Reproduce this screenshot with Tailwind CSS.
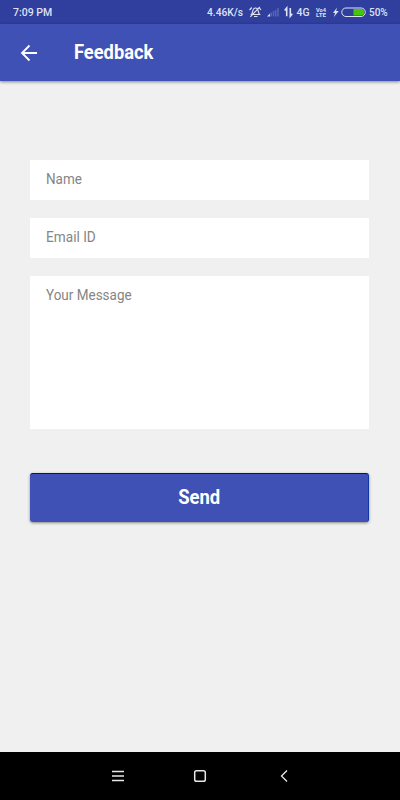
<!DOCTYPE html>
<html lang="en">
<head>
<meta charset="utf-8">
<title>Feedback</title>
<script src="https://cdn.jsdelivr.net/npm/@tailwindcss/browser@4"></script>
</head>
<body class="w-[400px] h-[800px] overflow-hidden bg-[#f0f0f0] font-['Roboto',sans-serif] flex flex-col">
  <div class="h-6 shrink-0 bg-[#303e9e] flex items-center pl-[13px] text-[10px] font-medium text-[#dfe2f3] whitespace-nowrap">
    <span class="w-[194px] pt-[2px] text-[10.5px]">7:09 PM</span>
    <span class="w-[41px] pt-px origin-left scale-x-[1.02]">4.46K/s</span>
    <svg class="w-[153px] h-6 shrink-0 -mr-[32px]" viewBox="248 0 153 24" fill="none" stroke="#dfe2f3">
      <path d="M251.500 14.500c1.500-1.500.5-6.500 4-6.500 3.400 0 2.500 5 4 6.500zM254 16.500h3.500M249.500 10l2.300-2.500M259 7.500l2 2.500M259.800 7l-9.500 9.800" stroke-width="1.150"/>
      <path d="M267 16.500h3v-3z" fill="#dfe2f3" stroke="none"/>
      <path d="M271.300 16.500v-4M273.500 16.500v-5.500M275.700 16.500v-6.800M278 16.500v-8.500" stroke="#5865b3" stroke-width="1.500"/>
      <path d="M286.700 16.300V8l-2 2.500M290.300 8v8.300l2-2.500" stroke-width="1.600"/>
      <path d="M337 7.500l-4 5.500h2.200l-1.500 4.300 5-6.300h-2.600z" fill="#dfe2f3" stroke="none"/>
      <rect x="341.800" y="8" width="23.500" height="8.500" rx="4.200" stroke-width="1"/>
      <path d="M353.500 9h7.500a3.200 3.200 0 0 1 0 6.500h-7.500z" fill="#46c60b" stroke="none"/>
      <g fill="#dfe2f3" stroke="none" font-family="Roboto, sans-serif" font-weight="500">
        <text x="296.500" y="16.300" font-size="10" textLength="13" lengthAdjust="spacingAndGlyphs">4G</text>
        <text x="316" y="11.800" font-size="5.800" font-weight="700" textLength="10" lengthAdjust="spacingAndGlyphs">Vo4</text>
        <text x="316" y="17" font-size="5.800" font-weight="700" textLength="10" lengthAdjust="spacingAndGlyphs">LTE</text>
      </g>
    </svg>
    <span class="pt-px">50%</span>
  </div>
  <header class="relative h-[57px] shrink-0 bg-[#3f51b5] shadow-[0_1px_3px_rgba(0,0,0,0.45)] flex items-center pl-5 text-white">
    <svg class="w-[18px] h-[18px] mr-[35.500px]" viewBox="0 0 18 18" fill="none" stroke="white" stroke-width="1.800"><path d="M17 9H2M9.500 1.500L2 9l7.500 7.500"/></svg>
    <h1 class="text-[20px] leading-6 font-bold origin-left scale-x-[0.915] -mt-px">Feedback</h1>
  </header>
  <main class="flex-1 pl-[30px] pt-[79px] pr-[31px] flex flex-col text-[15.500px] leading-[18px] text-[#858585]">
    <div class="h-[40px] bg-white pl-[16px] pt-[10px]"><div class="origin-left scale-x-[0.87]">Name</div></div>
    <div class="h-[40px] mt-[18px] bg-white pl-[16px] pt-[10px]"><div class="origin-left scale-x-[0.88]">Email ID</div></div>
    <div class="h-[153px] mt-[18px] bg-white pl-[16px] pt-[10px]"><div class="origin-left scale-x-[0.87]">Your Message</div></div>
    <button class="mt-[44px] h-[49px] rounded-[3px] bg-[#3f51b5] border-t border-r border-t-[#000c94] border-r-[#1238a8] shadow-[0_1px_3px_rgba(0,0,0,0.45)] text-white text-[19.500px] font-bold flex items-center justify-center"><span class="scale-x-[0.945]">Send</span></button>
  </main>
  <nav class="h-12 shrink-0 bg-black flex items-center">
    <svg class="w-full h-12" viewBox="0 0 400 48" fill="none" stroke="#e8e8e8" stroke-width="1.300">
      <path d="M112 19.500h12M112 24h12M112 28.500h12"/>
      <rect x="194.700" y="18.700" width="10.600" height="10.600" rx="1.800" stroke-width="1.500"/>
      <path d="M287 18.500L281.500 24l5.500 5.500"/>
    </svg>
  </nav>
</body>
</html>
